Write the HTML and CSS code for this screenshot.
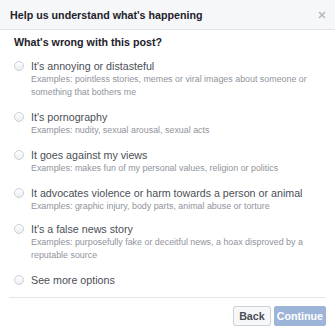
FILE: index.html
```html
<!DOCTYPE html>
<html lang="en">
<head>
  <meta charset="UTF-8">
  <title>Help us understand what's happening</title>
  <link rel="stylesheet" href="styles.css">
</head>
<body>
  <div class="dialog">
    <div class="dialog-header">
      <h1>Help us understand what's happening</h1>
      <svg class="close" width="8" height="8" viewBox="0 0 8 8">
        <path d="M1 1L7 7M7 1L1 7" stroke="#b3b7bd" stroke-width="1.6" fill="none"/>
      </svg>
    </div>

    <div class="dialog-body">
      <h2>What's wrong with this post?</h2>

      <ul class="options">
        <li>
          <span class="radio"></span>
          <div>
            <div class="opt-title">It's annoying or distasteful</div>
            <div class="opt-desc">Examples: pointless stories, memes or viral images about someone or something that bothers me</div>
          </div>
        </li>
        <li>
          <span class="radio"></span>
          <div>
            <div class="opt-title">It's pornography</div>
            <div class="opt-desc">Examples: nudity, sexual arousal, sexual acts</div>
          </div>
        </li>
        <li>
          <span class="radio"></span>
          <div>
            <div class="opt-title">It goes against my views</div>
            <div class="opt-desc">Examples: makes fun of my personal values, religion or politics</div>
          </div>
        </li>
        <li class="tight">
          <span class="radio"></span>
          <div>
            <div class="opt-title">It advocates violence or harm towards a person or animal</div>
            <div class="opt-desc">Examples: graphic injury, body parts, animal abuse or torture</div>
          </div>
        </li>
        <li>
          <span class="radio"></span>
          <div>
            <div class="opt-title">It's a false news story</div>
            <div class="opt-desc">Examples: purposefully fake or deceitful news, a hoax disproved by a reputable source</div>
          </div>
        </li>
        <li>
          <span class="radio"></span>
          <div>
            <div class="opt-title">See more options</div>
          </div>
        </li>
      </ul>
    </div>

    <div class="dialog-footer">
      <button class="btn btn-back">Back</button>
      <button class="btn btn-primary" disabled>Continue</button>
    </div>
  </div>
</body>
</html>
```

FILE: styles.css
```css
/* General */
* {
  margin: 0;
  padding: 0;
  box-sizing: border-box;
}

body {
  background: #fff;
  font-family: "Liberation Sans", Arial, sans-serif;
  font-size: 10.7px;
  color: #1d2129;
}

/* Header */
.dialog-header {
  height: 30px;
  background: #f6f7f9;
  border-bottom: 1px solid #e5e5e5;
  display: flex;
  justify-content: space-between;
  align-items: center;
  padding: 0 9px 0 10px;
}

.dialog-header h1 {
  font-size: 10.7px;
  font-weight: bold;
  color: #1d2129;
}

/* Body */
.dialog-body {
  padding: 5px 12px 0 14px;
}

.dialog-body h2 {
  font-size: 10.7px;
  line-height: 14px;
  font-weight: bold;
  color: #1d2129;
  margin-bottom: 10px;
}

.options {
  list-style: none;
}

.options li {
  display: flex;
  gap: 7px;
  margin-bottom: 11px;
}

.options li.tight {
  margin-bottom: 9px;
}

.options li:last-child {
  margin-bottom: 10px;
}

.radio {
  flex: none;
  width: 10px;
  height: 10px;
  margin-top: 2px;
  border: 1px solid #ccd0d5;
  border-radius: 50%;
  background: linear-gradient(#fff, #eceef1);
}

.opt-title {
  color: #4b4f56;
  font-size: 10.7px;
  line-height: 14px;
}

.opt-desc {
  color: #90949c;
  font-size: 8.9px;
  line-height: 13px;
}

/* Footer */
.dialog-footer {
  margin: 0 9px;
  padding-top: 8px;
  border-top: 1px solid #e5e5e5;
  display: flex;
  justify-content: flex-end;
  gap: 3px;
}

.btn {
  font-family: inherit;
  font-size: 10.7px;
  font-weight: bold;
  height: 20px;
  border: 1px solid #ced0d4;
  border-radius: 2px;
  background: #f6f7f9;
  color: #4b4f56;
}

.btn-back {
  padding: 0 5px;
}

.btn-primary {
  padding: 0 2px;
  background: #9cb4d8;
  border-color: #9cb4d8;
  color: #fff;
}
```
